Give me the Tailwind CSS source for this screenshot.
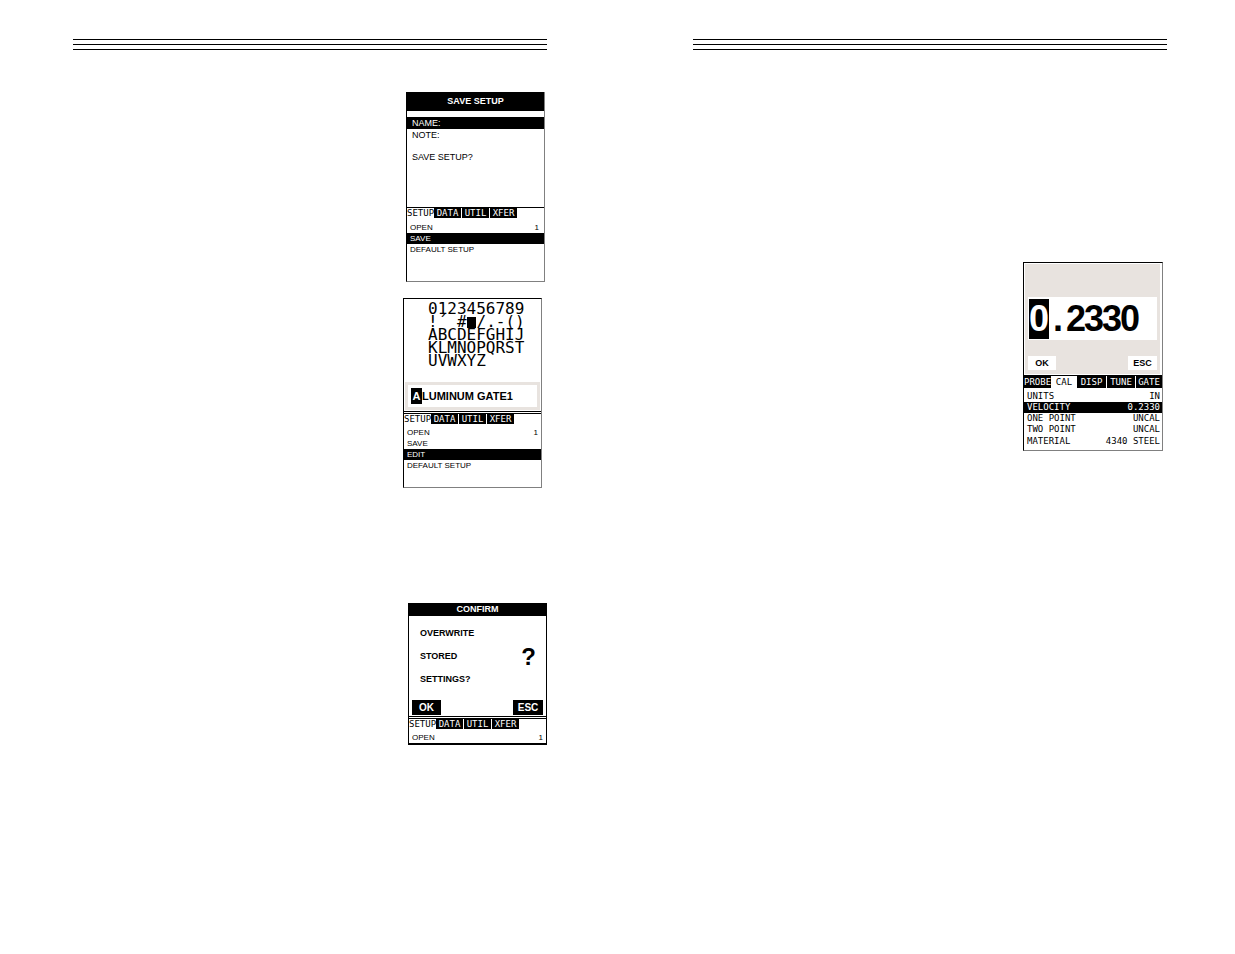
<!DOCTYPE html>
<html lang="en">
<head>
    <meta charset="UTF-8">
    <meta name="viewport" content="width=device-width, initial-scale=1.0">
    <title>Gauge Manual - Setup and Calibration Screens</title>
    <script src="https://cdn.jsdelivr.net/npm/@tailwindcss/browser@4"></script>
</head>
<body class="bg-white text-black font-['Liberation_Sans',sans-serif] min-h-screen">
    <div class="grid grid-cols-2 gap-[146px] pt-[39px] pl-[73px] pr-[68px]">

        <!-- Left page -->
        <main class="flex flex-col items-end">
            <div class="w-full h-[11px] border-y border-black flex items-center">
                <div class="w-full h-px bg-black"></div>
            </div>

            <!-- Save setup -->
            <section class="mt-[42px] mr-[2px] w-[139px] border-l border-l-black border-r border-r-[#808080] border-b border-b-[#808080] text-[8px] leading-[11px]">
                <h2 class="h-[19px] bg-black text-white text-[9px] leading-[19px] font-bold text-center">SAVE SETUP</h2>
                <div class="pt-[6px] h-[96px] text-[9px] leading-[12px]">
                    <p class="bg-black text-white pl-[5px]">NAME:</p>
                    <p class="pl-[5px]">NOTE:</p>
                    <p class="pl-[5px] mt-[10px]">SAVE SETUP?</p>
                </div>
                <nav class="flex border-t border-black font-['DejaVu_Sans_Mono',monospace] text-[9px] leading-[10px]">
                    <button class="w-[27px] h-[10px] text-left">SETUP</button>
                    <div class="flex gap-px">
                        <button class="w-[27px] h-[10px] bg-black text-white">DATA</button>
                        <button class="w-[27px] h-[10px] bg-black text-white">UTIL</button>
                        <button class="w-[27px] h-[10px] bg-black text-white">XFER</button>
                    </div>
                </nav>
                <div class="pt-[4px] h-[63px] flex flex-col">
                    <button class="flex justify-between pl-[3px] pr-[5px]"><span>OPEN</span><span>1</span></button>
                    <button class="text-left pl-[3px] bg-black text-white">SAVE</button>
                    <button class="text-left pl-[3px]">DEFAULT SETUP</button>
                </div>
            </section>

            <!-- Edit name -->
            <section class="mt-[16px] mr-[5px] w-[139px] border-l border-t border-l-black border-t-black border-r border-r-[#808080] border-b border-b-[#808080] text-[8px] leading-[11px]">
                <div class="h-[83px] pt-[3px] pl-[24px] font-['DejaVu_Sans_Mono',monospace] text-[16px] leading-[13px]">
                    <p>0123456789</p>
                    <p>!´&nbsp;#<span class="inline-block w-[9px] h-[11px] align-[-1px] mr-px bg-black"></span>/.-()</p>
                    <p>ABCDEFGHIJ</p>
                    <p>KLMNOPQRST</p>
                    <p>UVWXYZ</p>
                </div>
                <label class="mx-px mb-px h-[28px] border-[3px] border-[#e8e3df] flex items-center text-[11px] leading-[16px] font-bold">
                    <span class="ml-[3px] w-[11px] shrink-0 bg-black text-white text-center">A</span>
                    <input type="text" value="LUMINUM GATE1" aria-label="Setup name" class="w-full min-w-0 outline-none">
                </label>
                <div class="h-[3px] border-y border-black"></div>
                <nav class="flex font-['DejaVu_Sans_Mono',monospace] text-[9px] leading-[10px]">
                    <button class="w-[27px] h-[10px] text-left">SETUP</button>
                    <div class="flex gap-px">
                        <button class="w-[27px] h-[10px] bg-black text-white">DATA</button>
                        <button class="w-[27px] h-[10px] bg-black text-white">UTIL</button>
                        <button class="w-[27px] h-[10px] bg-black text-white">XFER</button>
                    </div>
                </nav>
                <div class="pt-[3px] h-[63px] flex flex-col">
                    <button class="flex justify-between pl-[3px] pr-[3px]"><span>OPEN</span><span>1</span></button>
                    <button class="text-left pl-[3px]">SAVE</button>
                    <button class="text-left pl-[3px] bg-black text-white">EDIT</button>
                    <button class="text-left pl-[3px]">DEFAULT SETUP</button>
                </div>
            </section>

            <!-- Confirm overwrite -->
            <section class="mt-[115px] w-[139px] border-x border-b-2 border-black text-[8px] leading-[11px]">
                <h2 class="h-[13px] bg-black text-white text-[9px] leading-[13px] font-bold text-center">CONFIRM</h2>
                <div class="flex items-center justify-between h-[81px] pl-[11px] pr-[10px] font-bold">
                    <div class="text-[9px] leading-[23px]">
                        <p>OVERWRITE</p>
                        <p>STORED</p>
                        <p>SETTINGS?</p>
                    </div>
                    <span class="text-[24px] leading-[24px]">?</span>
                </div>
                <div class="flex justify-between px-[3px] mt-[3px] mb-px text-[10px] leading-[15px] font-bold">
                    <button class="w-[29px] bg-black text-white">OK</button>
                    <button class="w-[30px] bg-black text-white">ESC</button>
                </div>
                <div class="h-[3px] border-y border-black"></div>
                <nav class="flex font-['DejaVu_Sans_Mono',monospace] text-[9px] leading-[10px]">
                    <button class="w-[27px] h-[10px] text-left">SETUP</button>
                    <div class="flex gap-px">
                        <button class="w-[27px] h-[10px] bg-black text-white">DATA</button>
                        <button class="w-[27px] h-[10px] bg-black text-white">UTIL</button>
                        <button class="w-[27px] h-[10px] bg-black text-white">XFER</button>
                    </div>
                </nav>
                <button class="w-full h-[14px] pt-[3px] flex justify-between pl-[3px] pr-[3px]"><span>OPEN</span><span>1</span></button>
            </section>
        </main>

        <!-- Right page -->
        <aside class="flex flex-col items-end">
            <div class="w-full h-[11px] border-y border-black flex items-center">
                <div class="w-full h-px bg-black"></div>
            </div>

            <!-- Velocity calibration -->
            <section class="mt-[212px] mr-[4px] w-[140px] border-l border-t border-l-black border-t-black border-r border-r-[#808080] border-b border-b-[#808080] font-['DejaVu_Sans_Mono',monospace] text-[9px] leading-[11px]">
                <div class="m-px mr-[2px] h-[110px] bg-[#e8e3df] pt-[33px] px-[3px] font-['Liberation_Sans',sans-serif]">
                    <div class="h-[43px] bg-white flex items-center pl-px text-[36px] leading-[40px] font-bold">
                        <span class="w-[20px] h-[40px] bg-black text-white flex justify-center">0</span>
                        <span class="w-[18px] flex justify-center">.</span>
                        <span class="w-[18px] flex justify-center">2</span>
                        <span class="w-[18px] flex justify-center">3</span>
                        <span class="w-[18px] flex justify-center">3</span>
                        <span class="w-[18px] flex justify-center">0</span>
                    </div>
                    <div class="mt-[16px] flex justify-between text-[9px] leading-[14px] font-bold">
                        <button class="w-[28px] bg-white">OK</button>
                        <button class="w-[29px] bg-white">ESC</button>
                    </div>
                </div>
                <nav class="flex border-t border-black bg-black text-white leading-[12px]">
                    <button class="w-[27px] h-[12px] text-left">PROBE</button>
                    <button class="w-[26px] h-[12px] bg-white text-black">CAL</button>
                    <button class="w-[29px] h-[12px]">DISP</button>
                    <button class="w-[29px] h-[12px] border-l border-white">TUNE</button>
                    <button class="w-[27px] h-[12px] border-l border-white">GATE</button>
                </nav>
                <table class="w-full mt-[2px] mb-[3px]">
                    <tbody>
                        <tr>
                            <td class="h-[12px] p-0 pl-[3px]">UNITS</td>
                            <td class="p-0 pr-[2px] text-right">IN</td>
                        </tr>
                        <tr class="bg-black text-white">
                            <td class="h-[11px] p-0 pl-[3px]">VELOCITY</td>
                            <td class="p-0 pr-[2px] text-right">0.2330</td>
                        </tr>
                        <tr>
                            <td class="h-[11px] p-0 pl-[3px]">ONE POINT</td>
                            <td class="p-0 pr-[2px] text-right">UNCAL</td>
                        </tr>
                        <tr>
                            <td class="h-[11px] p-0 pl-[3px]">TWO POINT</td>
                            <td class="p-0 pr-[2px] text-right">UNCAL</td>
                        </tr>
                        <tr>
                            <td class="h-[12px] p-0 pl-[3px]">MATERIAL</td>
                            <td class="p-0 pr-[2px] text-right">4340 STEEL</td>
                        </tr>
                    </tbody>
                </table>
            </section>
        </aside>
    </div>
</body>
</html>
